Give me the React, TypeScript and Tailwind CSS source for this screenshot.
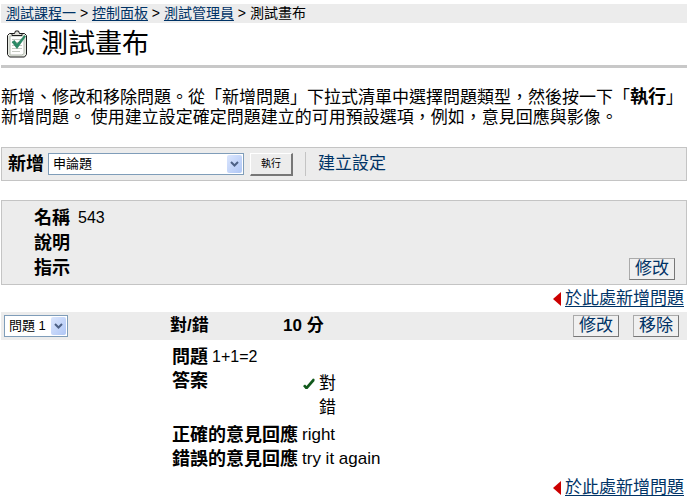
import type { ReactNode } from 'react';

const crumbs = ['測試課程一', '控制面板', '測試管理員'];

const details = [
  { label: '名稱', value: '543' },
  { label: '說明', value: '' },
  { label: '指示', value: '' },
];

const answers = [
  { text: '對', correct: true },
  { text: '錯', correct: false },
];

const feedback = [
  { label: '正確的意見回應', value: 'right' },
  { label: '錯誤的意見回應', value: 'try it again' },
];

function ClipboardIcon() {
  return (
    <svg width="20" height="28" viewBox="0 0 20 28" aria-hidden="true">
      <path d="M2.5 3.500h15l2 2v19l-2 2.500h-15l-2-2.500v-19z" fill="#e6e9e2" stroke="#1c1c1c" />
      <path d="M3 6h14v17.500l-2 1.500H3z" fill="#fff" stroke="#b4bbb0" />
      <path d="M5 5.500v-2h2.500l1-2.500h3l1 2.500H15v2z" fill="#deded8" stroke="#1c1c1c" />
      <path d="M5 9.500h9M5 12.500h9M5 15.500h10M5 18.500h10M5 21.500h8" stroke="#c6cac2" />
      <path d="M5 12l2.500-1.500L10 14 17.500 5.500l1 1L10 18.500z" fill="#2a8a66" stroke="#1f7758" strokeWidth="0.6" />
    </svg>
  );
}

function CheckIcon() {
  return (
    <svg width="12" height="12" viewBox="0 0 12 12" aria-hidden="true">
      <path d="M0 8l2-1.500L3.500 8 10 0.500l1.500 0.500v2L4.500 11H2.500z" fill="#11591b" />
    </svg>
  );
}

interface DropDownProps {
  label: string;
  options: string[];
  className: string;
}

function DropDown({ label, options, className }: DropDownProps) {
  return (
    <div className={`relative h-[22px] ${className}`}>
      <select
        aria-label={label}
        className="block h-full w-full appearance-none border border-[#7f9db9] bg-white pr-5 pl-1 text-[13px] leading-5 text-black"
      >
        {options.map((option) => (
          <option key={option}>{option}</option>
        ))}
      </select>
      <span className="pointer-events-none absolute top-0.5 right-0.5 bottom-0.5 flex w-[15px] items-center justify-center rounded-xs bg-linear-to-br from-[#dbe6fd] to-[#afc6f5]">
        <svg width="9" height="6" viewBox="0 0 9 6" aria-hidden="true">
          <path d="M1 1l3.500 3.500L8 1" fill="none" stroke="#4d6185" strokeWidth="2" />
        </svg>
      </span>
    </div>
  );
}

function ActionButton({ children }: { children: ReactNode }) {
  return (
    <button
      type="button"
      className="h-[22px] w-[46px] cursor-pointer border border-t-[#aaa] border-r-[#777] border-b-[#777] border-l-[#aaa] bg-[#f0f0f0] leading-5 text-[#003366]"
    >
      {children}
    </button>
  );
}

function AddHere() {
  return (
    <div className="flex h-[27px] items-center justify-end gap-1 pr-[3px]">
      <svg width="8" height="14" viewBox="0 0 8 14" aria-hidden="true">
        <path d="M8 0v14L0 7z" fill="#c00" />
      </svg>
      <a href="#add" className="leading-5 text-[#003366] underline underline-offset-2">
        於此處新增問題
      </a>
    </div>
  );
}

export default function App() {
  return (
    <main className="bg-white px-px pt-1 font-['Liberation_Sans','Noto_Sans_CJK_TC',sans-serif] text-[17px] leading-5 text-black">
      {/* Breadcrumb */}
      <nav className="h-[19px] bg-[#ececec] pl-[5px] text-[14px] leading-[18px]">
        {crumbs.map((crumb) => (
          <span key={crumb}>
            <a href="#crumb" className="text-[#003366] underline underline-offset-2">{crumb}</a>
            {' > '}
          </span>
        ))}
        <span>測試畫布</span>
      </nav>

      {/* Page title */}
      <header className="flex h-[45px] items-center gap-[14px] border-b-3 border-[#c8c8c8] pl-1.5">
        <ClipboardIcon />
        <h1 className="text-[27px] leading-9">測試畫布</h1>
      </header>

      <p className="mt-[19px]">
        新增、修改和移除問題。從「新增問題」下拉式清單中選擇問題類型，然後按一下「<b className="text-[18px]">執行</b>」
        <br />
        新增問題。 使用建立設定確定問題建立的可用預設選項，例如，意見回應與影像。
      </p>

      {/* Toolbar */}
      <div className="mt-[19px] flex h-[34px] items-center border border-[#c4c4c4] bg-[#ececec] pl-1.5">
        <b className="text-[18px]">新增</b>
        <DropDown label="新增" options={['申論題']} className="ml-1 w-[196px]" />
        <button
          type="button"
          className="ml-1.5 h-[23px] w-[43px] cursor-pointer border-t border-r-2 border-b-2 border-l border-t-white border-r-[#777] border-b-[#777] border-l-white bg-[#ececec] text-[10px] leading-5"
        >
          執行
        </button>
        <span className="ml-3 h-6 border-l border-[#c4c4c4]" />
        <a href="#settings" className="ml-3 text-[#003366]">建立設定</a>
      </div>

      {/* Canvas details */}
      <section className="mt-[19px] flex items-end justify-between border border-[#c4c4c4] bg-[#ececec] pt-1 pr-[11px] pb-1 pl-8">
        <dl>
          {details.map((row) => (
            <div key={row.label} className="flex h-[25px] items-center">
              <dt className="w-11 text-[18px] font-bold">{row.label}</dt>
              <dd className="text-[16px]">{row.value}</dd>
            </div>
          ))}
        </dl>
        <ActionButton>修改</ActionButton>
      </section>

      <AddHere />

      {/* Question header */}
      <div className="flex h-7 items-center bg-[#ececec] pr-2 pl-[3px] font-bold">
        <div className="w-[166px] font-normal">
          <DropDown label="問題順序" options={['問題 1']} className="w-16" />
        </div>
        <h2 className="w-[113px]">對/錯</h2>
        <span className="flex-1">10 分</span>
        <div className="flex gap-[14px] font-normal">
          <ActionButton>修改</ActionButton>
          <ActionButton>移除</ActionButton>
        </div>
      </div>

      {/* Question body */}
      <dl className="pt-[5px] pl-[171px]">
        <div className="flex h-6 items-center gap-1">
          <dt className="text-[18px] font-bold">問題</dt>
          <dd className="text-[16px]">1+1=2</dd>
        </div>
        <div className="flex pb-[3px]">
          <dt className="w-[131px] text-[18px] leading-6 font-bold">答案</dt>
          <dd className="pt-[3px]">
            {answers.map((answer) => (
              <div key={answer.text} className="flex h-6 items-center">
                <span className="w-4">{answer.correct && <CheckIcon />}</span>
                {answer.text}
              </div>
            ))}
          </dd>
        </div>
        {feedback.map((row) => (
          <div key={row.label} className="flex h-6 items-center gap-1">
            <dt className="text-[18px] font-bold">{row.label}</dt>
            <dd>{row.value}</dd>
          </div>
        ))}
      </dl>

      <div className="pt-[3px]">
        <AddHere />
      </div>
    </main>
  );
}
